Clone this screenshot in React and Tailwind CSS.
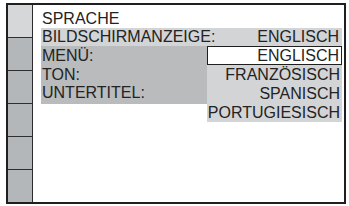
export default function App() {
  const sideCells = [0, 1, 2, 3, 4, 5];
  const options = ["ENGLISCH", "FRANZÖSISCH", "SPANISCH", "PORTUGIESISCH"];

  return (
    <div className="w-[349px] h-[206px] bg-white pt-[3px] pl-[6px]" style={{ fontFamily: '"Liberation Sans", Arial, sans-serif' }}>
      <div className="w-[340px] h-[201px] border-2 border-[#1f1f1f] flex bg-white text-[16px] leading-[18px] text-[#232323]">
        {/* left column of blank tabs */}
        <div className="w-[25px] flex flex-col border-r border-[#2a2a2a]">
          {sideCells.map((i) => (
            <div
              key={i}
              className={`flex-1 ${i === 0 ? "bg-[#d6d7d9]" : "bg-[#b4b7ba]"} ${i < 5 ? "border-b border-[#2f2f2f]" : ""}`}
            />
          ))}
        </div>

        <div className="flex-1 pt-[5px] pl-[8px] pr-[2px]">
          <div className="h-[18px] pl-px">SPRACHE</div>

          <div className="h-[18px] flex justify-between bg-[#d3d4d5] pl-px pr-[3px]">
            <span>BILDSCHIRMANZEIGE:</span>
            <span>ENGLISCH</span>
          </div>

          <div className="flex">
            <div className="w-[166px] h-[58px] bg-[#b9bbbd] pl-px pt-[1px]">
              <div className="h-[19px]">MENÜ:</div>
              <div className="h-[18px]">TON:</div>
              <div className="h-[19px]">UNTERTITEL:</div>
            </div>
            <div className="flex-1 bg-[#d3d4d5]">
              {options.map((o, i) => (
                <div
                  key={o}
                  className={`h-[19px] flex items-center justify-end pr-[2px] ${
                    i === 0 ? "bg-white border-[1.5px] border-[#1f1f1f] pr-[1px]" : ""
                  }`}
                >
                  {o}
                </div>
              ))}
            </div>
          </div>
        </div>
      </div>
    </div>
  );
}
